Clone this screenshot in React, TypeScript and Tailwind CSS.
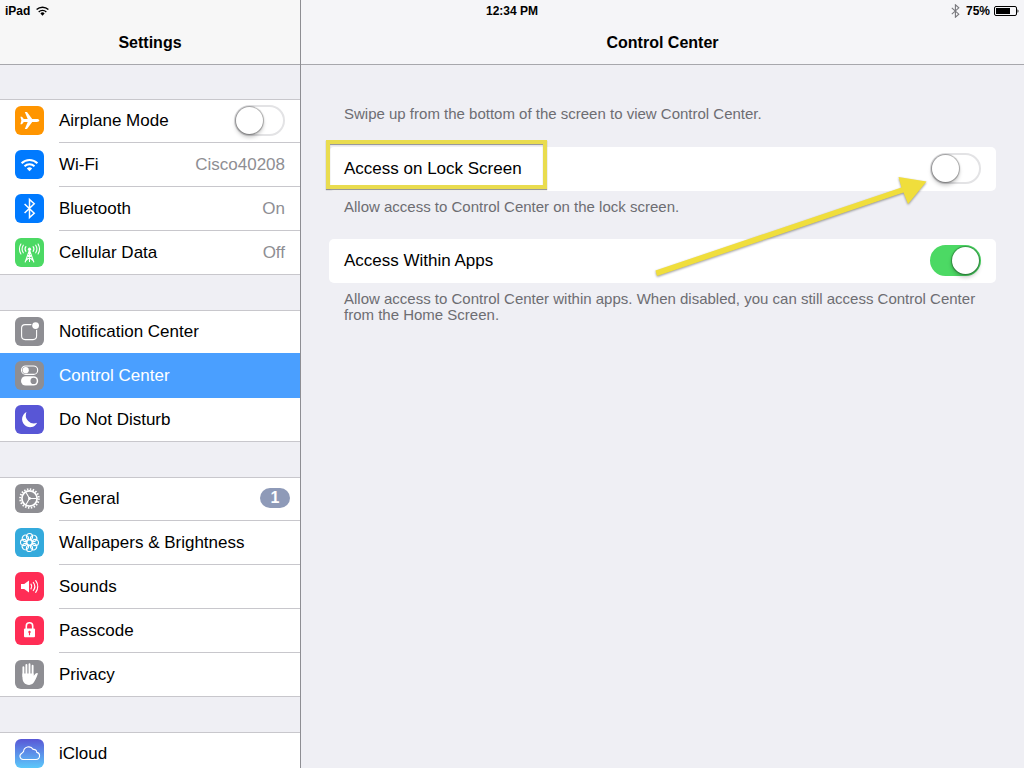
import { useState } from 'react'
import type { ReactNode } from 'react'

type IconProps = { color: string; children: ReactNode }

function IconTile({ color, children }: IconProps) {
  return (
    <span className={`mb-px block size-[29px] shrink-0 overflow-hidden rounded-[6px] ${color}`}>
      <svg viewBox="0 0 29 29" className="size-full" fill="none" aria-hidden="true">
        {children}
      </svg>
    </span>
  )
}

const AirplaneIcon = () => (
  <IconTile color="bg-[#ff9500]">
    <path
      d="M24.300 14.500c0-.8-1.100-1.400-2.400-1.400h-4.700L12 6H9.800l2.900 7.100H8.800L7 10.800H5.400l1 3.700-1 3.700H7l1.800-2.300h3.900L9.800 23H12l5.200-7.100h4.700c1.300 0 2.400-.6 2.400-1.400z"
      fill="#fff"
    />
  </IconTile>
)

const WifiIcon = () => (
  <IconTile color="bg-[#007aff]">
    <g stroke="#fff" strokeWidth="2">
      <path d="M6.600 13.200a11.300 11.300 0 0 1 15.800 0" />
      <path d="M9.500 16.300a7.200 7.200 0 0 1 10 0" />
    </g>
    <path d="M11.800 18.400a4 4 0 0 1 5.400 0L14.500 21.300z" fill="#fff" />
  </IconTile>
)

const BluetoothIcon = () => (
  <IconTile color="bg-[#007aff]">
    <path d="M9.600 10l9.600 9.200-4.700 4.300v-18l4.700 4.300L9.600 19" stroke="#fff" strokeWidth="1.500" />
  </IconTile>
)

const CellularIcon = () => (
  <IconTile color="bg-[#4cd964]">
    <g stroke="#fff" strokeWidth="1.100" strokeLinecap="round">
      <path d="M10.900 13.400a4 4 0 0 1 0-4.800M18.100 13.400a4 4 0 0 0 0-4.800" />
      <path d="M8.300 14.800a7 7 0 0 1 0-7.600M20.700 14.800a7 7 0 0 0 0-7.600" />
      <path d="M5.900 16a10 10 0 0 1 0-10M23.100 16a10 10 0 0 0 0-10" />
      <path d="M14.500 12L10.200 24M14.500 12L18.800 24M14.500 12v11.500M12.600 17.500l5.500 5M16.400 17.500l-5.500 5M12.600 17.500h3.800" />
    </g>
    <circle cx="14.500" cy="11.200" r="1.600" fill="#fff" />
  </IconTile>
)

const NotificationIcon = () => (
  <IconTile color="bg-[#8e8e93]">
    <rect x="6.600" y="7.600" width="15" height="15" rx="3.500" stroke="#fff" strokeWidth="1.100" />
    <circle cx="20.600" cy="8.600" r="4.400" fill="#8e8e93" />
    <circle cx="20.600" cy="8.600" r="3.400" fill="#fff" />
  </IconTile>
)

const ControlIcon = () => (
  <IconTile color="bg-[#8e8e93]">
    <rect x="6.500" y="5" width="16.200" height="8.400" rx="4.200" stroke="#fff" strokeWidth="1.100" />
    <circle cx="10.700" cy="9.200" r="3.100" fill="#fff" />
    <rect x="6" y="15.200" width="17.200" height="9.400" rx="4.700" fill="#fff" />
    <circle cx="18.600" cy="19.900" r="3.100" fill="#8e8e93" />
  </IconTile>
)

const MoonIcon = () => (
  <IconTile color="bg-[#5856d6]">
    <path d="M11.500 7a8 8 0 1 0 10.700 10.800A8.200 8.200 0 0 1 11.500 7z" fill="#fff" />
  </IconTile>
)

const GearIcon = () => (
  <IconTile color="bg-[#8e8e93]">
    <circle cx="14.500" cy="14.500" r="9.300" stroke="#fff" strokeWidth="2" strokeDasharray="1.500 1.422" />
    <circle cx="14.500" cy="14.500" r="7.600" stroke="#fff" strokeWidth="1.700" />
    <path d="M14.500 14.500h7M14.500 14.500l-3.600-6.200M14.500 14.500l-3.600 6.200" stroke="#fff" strokeWidth="1.100" />
    <circle cx="14.500" cy="14.500" r="1.400" fill="#fff" />
  </IconTile>
)

const petals = [0, 45, 90, 135, 180, 225, 270, 315]

const WallpaperIcon = () => (
  <IconTile color="bg-[#34aadc]">
    <g stroke="#fff" strokeWidth="1.100">
      {petals.map((angle) => (
        <circle key={angle} cx="14.500" cy="8.600" r="3.100" transform={`rotate(${angle} 14.500 14.500)`} />
      ))}
      <circle cx="14.500" cy="14.500" r="2.700" />
    </g>
  </IconTile>
)

const SoundsIcon = () => (
  <IconTile color="bg-[#ff2d55]">
    <path d="M6 12h3.200l4.800-3.500v12L9.200 17H6z" fill="#fff" />
    <g stroke="#fff" strokeWidth="1.200" strokeLinecap="round">
      <path d="M16 12.200a4 4 0 0 1 0 4.600" />
      <path d="M18.300 10.500a6.500 6.500 0 0 1 0 8" />
      <path d="M20.700 8.700a9.500 9.500 0 0 1 0 11.600" />
    </g>
  </IconTile>
)

const PasscodeIcon = () => (
  <IconTile color="bg-[#ff2d55]">
    <path d="M11.300 13.500V10a3.200 3.200 0 0 1 6.400 0v3.500" stroke="#fff" strokeWidth="1.600" />
    <rect x="9" y="12.500" width="11" height="8.800" rx="1" fill="#fff" />
    <circle cx="14.500" cy="16" r="1.200" fill="#ff2d55" />
    <path d="M14.500 16.500v2.800" stroke="#ff2d55" strokeWidth="1.100" />
  </IconTile>
)

const HandIcon = () => (
  <IconTile color="bg-[#8e8e93]">
    <g stroke="#fff" strokeWidth="1.900" strokeLinecap="round">
      <path d="M8.400 7.300v9M11.400 5v10M14.500 4.300v10M17.600 5.700v10" />
    </g>
    <path
      d="M7.450 13.500h11.100v2.600l2.100-2.500c.8-.9 2.500-.7 2.100.3-.7 2-2 5.300-3.400 7.700-1.300 2.200-2.600 3.300-5.200 3.300-4.400 0-6.700-3-6.700-7.600z"
      fill="#fff"
    />
  </IconTile>
)

const CloudIcon = () => (
  <IconTile color="bg-linear-to-b from-[#5856d6] to-[#5ac8fa]">
    <path
      d="M8 20.500h13a3.600 3.600 0 0 0 .8-7.100 3.100 3.100 0 0 0-3.700-3 5.200 5.200 0 0 0-9.600 2.300 3 3 0 0 0-1.600 1.500A3.300 3.300 0 0 0 8 20.500z"
      stroke="#fff"
      strokeWidth="1.100"
    />
  </IconTile>
)

type SwitchProps = { id: string; checked: boolean; onChange: (on: boolean) => void }

function Switch({ id, checked, onChange }: SwitchProps) {
  return (
    <input
      id={id}
      type="checkbox"
      role="switch"
      checked={checked}
      onChange={(e) => onChange(e.target.checked)}
      className="relative h-[31px] w-[51px] shrink-0 appearance-none rounded-full border-2 border-[#e3e3e5] bg-white before:absolute before:left-0 before:top-0 before:size-[27px] before:rounded-full before:bg-white before:shadow-[0_0_1px_1px_rgba(0,0,0,0.3),0_3px_4px_rgba(0,0,0,0.25)] checked:border-[#4cd964] checked:bg-[#4cd964] checked:before:left-5"
    />
  )
}

type Item = { label: string; icon: ReactNode; value?: string; badge?: number }

const groups: Item[][] = [
  [
    { label: 'Airplane Mode', icon: <AirplaneIcon /> },
    { label: 'Wi-Fi', icon: <WifiIcon />, value: 'Cisco40208' },
    { label: 'Bluetooth', icon: <BluetoothIcon />, value: 'On' },
    { label: 'Cellular Data', icon: <CellularIcon />, value: 'Off' },
  ],
  [
    { label: 'Notification Center', icon: <NotificationIcon /> },
    { label: 'Control Center', icon: <ControlIcon /> },
    { label: 'Do Not Disturb', icon: <MoonIcon /> },
  ],
  [
    { label: 'General', icon: <GearIcon />, badge: 1 },
    { label: 'Wallpapers & Brightness', icon: <WallpaperIcon /> },
    { label: 'Sounds', icon: <SoundsIcon /> },
    { label: 'Passcode', icon: <PasscodeIcon /> },
    { label: 'Privacy', icon: <HandIcon /> },
  ],
  [{ label: 'iCloud', icon: <CloudIcon /> }],
]

function Sidebar() {
  const [selected, setSelected] = useState('Control Center')
  const [airplane, setAirplane] = useState(false)

  return (
    <nav aria-label="Settings" className="flex flex-col gap-[35px] pt-[34px]">
      {groups.map((items) => (
        <ul key={items[0].label} className="border-t border-[#c8c7cc] bg-white">
          {items.map((item) => {
            const active = item.label === selected
            return (
              <li
                key={item.label}
                className={`group -mt-px flex last:border-b last:border-[#c8c7cc] not-first:mt-0 ${
                  active ? 'relative -top-px -mb-px h-[45px] bg-[#4a9fff] text-white' : 'h-11'
                }`}
              >
                {item.label === 'Airplane Mode' ? (
                  <div className="flex flex-1 items-center gap-[15px] pl-[15px]">
                    {item.icon}
                    <div className="flex h-full flex-1 items-center border-b border-[#c8c7cc] pr-[15px]">
                      <label htmlFor="airplane" className="flex-1">
                        {item.label}
                      </label>
                      <Switch id="airplane" checked={airplane} onChange={setAirplane} />
                    </div>
                  </div>
                ) : (
                  <button
                    type="button"
                    aria-current={active ? 'page' : undefined}
                    onClick={() => setSelected(item.label)}
                    className="flex flex-1 items-center gap-[15px] pl-[15px] text-left"
                  >
                    {item.icon}
                    <span
                      className={`flex h-full flex-1 items-center justify-between group-last:border-b-0 ${
                        active ? '' : 'border-b border-[#c8c7cc]'
                      } ${item.badge ? 'pr-2.5' : 'pr-[15px]'}`}
                    >
                      <span>{item.label}</span>
                      {item.value && <span className="text-[#8e8e93]">{item.value}</span>}
                      {item.badge && (
                        <span className="mb-px flex h-5 w-[30px] items-center justify-center rounded-full bg-[#8e9ab8] text-base font-bold text-white">
                          {item.badge}
                        </span>
                      )}
                    </span>
                  </button>
                )}
              </li>
            )
          })}
        </ul>
      ))}
    </nav>
  )
}

function StatusBar() {
  return (
    <div className="absolute inset-x-0 top-0 grid h-[22px] grid-cols-3 items-center px-[5px] text-[12px] font-bold">
      <div className="flex items-center gap-1.5">
        <span>iPad</span>
        <svg width="13" height="10" viewBox="0 0 13 10" fill="none" aria-label="Wi-Fi">
          <path d="M.6 3.600a8.500 8.500 0 0 1 11.800 0M2.700 5.900a5.400 5.400 0 0 1 7.600 0" stroke="#000" strokeWidth="1.400" />
          <path d="M4.400 7.400a3 3 0 0 1 4.200 0L6.500 9.700z" fill="#000" />
        </svg>
      </div>
      <time className="text-center">12:34 PM</time>
      <div className="flex items-center justify-end">
        <svg width="9" height="14" viewBox="0 0 9 14" fill="none" aria-label="Bluetooth" className="mr-1.5">
          <path d="M.8 3.800l7 6.400-3.400 3V.8l3.400 3-7 6.400" stroke="#77777c" strokeWidth="1.100" />
        </svg>
        <span className="mr-1">75%</span>
        <svg width="25" height="10" viewBox="0 0 25 10" fill="none" aria-label="Battery">
          <rect x=".5" y=".5" width="22" height="9" rx="1.500" stroke="#000" />
          <rect x="2" y="2" width="14" height="6" fill="#000" />
          <path d="M23.500 3.200c1.300.4 1.300 3.200 0 3.600z" fill="#000" />
        </svg>
      </div>
    </div>
  )
}

function Arrow() {
  return (
    <svg
      width="280"
      height="110"
      viewBox="0 0 280 110"
      aria-hidden="true"
      className="pointer-events-none absolute right-[64px] top-[23px] z-10 drop-shadow-[0_1px_1px_rgba(0,0,0,0.4)]"
    >
      <path d="M3.500 100.500L249.500 17.500l-3-10.500L274.500 11.500 256 34l-4.500-11.500L5 106z" fill="#f0de3c" />
    </svg>
  )
}

function ControlCenter() {
  const [lockScreen, setLockScreen] = useState(false)
  const [withinApps, setWithinApps] = useState(true)

  return (
    <main className="px-7 pt-[41px]">
      <p className="px-[15px] text-[15px] leading-4 text-[#6d6d72]">
        Swipe up from the bottom of the screen to view Control Center.
      </p>

      <div className="relative mt-[25px] flex h-11 items-center justify-between rounded-[5px] bg-white px-[15px] pb-px">
        <label htmlFor="lock-screen">Access on Lock Screen</label>
        <Switch id="lock-screen" checked={lockScreen} onChange={setLockScreen} />
        <div className="pointer-events-none absolute -left-[3px] -top-[7px] h-[49px] w-[221px] border-4 border-[#e9dc4f] shadow-[0_1px_1px_rgba(0,0,0,0.4),inset_0_1px_1px_rgba(0,0,0,0.4)]" />
        <Arrow />
      </div>
      <p className="mt-2 px-[15px] text-[15px] leading-4 text-[#6d6d72]">
        Allow access to Control Center on the lock screen.
      </p>

      <div className="mt-6 flex h-11 items-center justify-between rounded-[5px] bg-white px-[15px] pb-px">
        <label htmlFor="within-apps">Access Within Apps</label>
        <Switch id="within-apps" checked={withinApps} onChange={setWithinApps} />
      </div>
      <p className="mt-2 px-[15px] text-[15px] leading-4 text-[#6d6d72]">
        Allow access to Control Center within apps. When disabled, you can still access Control Center from the Home
        Screen.
      </p>
    </main>
  )
}

export default function App() {
  return (
    <div className="relative flex h-screen overflow-hidden bg-[#efeff4] font-['Liberation_Sans',Arial,sans-serif] text-[17px] leading-5 text-black">
      <aside className="flex w-[301px] shrink-0 flex-col border-r border-[#8e8e93]">
        <header className="h-[65px] shrink-0 border-b border-[#a7a7ac] bg-[#f7f7f7] pt-[33px] text-center">
          <h1 className="text-[16px] font-bold leading-5">Settings</h1>
        </header>
        <div className="min-h-0 flex-1 overflow-hidden">
          <Sidebar />
        </div>
      </aside>
      <div className="min-w-0 flex-1">
        <header className="h-[65px] border-b border-[#a7a7ac] bg-[#f5f5f8] pt-[33px] text-center">
          <h2 className="text-[16px] font-bold leading-5">Control Center</h2>
        </header>
        <ControlCenter />
      </div>
      <StatusBar />
    </div>
  )
}
